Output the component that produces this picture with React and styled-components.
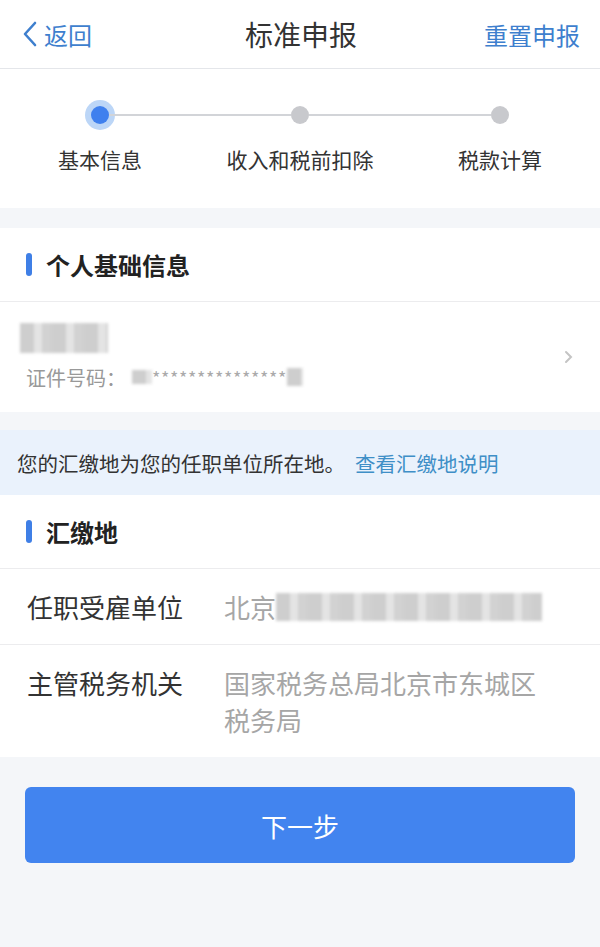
import React from 'react';
import styled, { createGlobalStyle } from 'styled-components';

const GlobalStyle = createGlobalStyle`
  html, body {
    margin: 0;
    padding: 0;
    background: #f4f6f9;
    font-family: "Noto Sans CJK SC", "Noto Sans", sans-serif;
  }
`;

const steps = [
  { label: '基本信息', active: true },
  { label: '收入和税前扣除' },
  { label: '税款计算' },
];

function App() {
  return (
    <Page>
      <GlobalStyle />
      <TopBar>
        <BackLink>
          <svg width="16" height="28" viewBox="0 0 16 28">
            <path d="M13 3 L3 14 L13 25" fill="none" stroke="#3e7fce" strokeWidth="2.6" strokeLinecap="round" strokeLinejoin="round" />
          </svg>
          返回
        </BackLink>
        <Title>标准申报</Title>
        <ResetLink>重置申报</ResetLink>
      </TopBar>

      <StepsPanel>
        <StepTrack>
          {steps.map((s, i) => (
            <Step key={s.label}>
              <DotRow>
                <Line $hidden={i === 0} />
                <Dot $active={s.active} />
                <Line $hidden={i === steps.length - 1} />
              </DotRow>
              <StepLabel>{s.label}</StepLabel>
            </Step>
          ))}
        </StepTrack>
      </StepsPanel>

      <Card>
        <SectionHead>
          <Bar />
          个人基础信息
        </SectionHead>
        <PersonRow>
          <div>
            <Mosaic $w={88} $h={30} />
            <IdLine>
              证件号码：
              <Masked>
                <Mosaic $w={20} $h={14} />
                ***************
                <Mosaic $w={16} $h={18} />
              </Masked>
            </IdLine>
          </div>
          <svg width="12" height="16" viewBox="0 0 12 16">
            <path d="M4 3 L9 8 L4 13" fill="none" stroke="#c4c4c4" strokeWidth="2" strokeLinecap="round" />
          </svg>
        </PersonRow>
      </Card>

      <Notice>
        您的汇缴地为您的任职单位所在地。
        <NoticeLink>查看汇缴地说明</NoticeLink>
      </Notice>

      <Card $flush>
        <SectionHead>
          <Bar />
          汇缴地
        </SectionHead>
        <FieldRow>
          <FieldLabel>任职受雇单位</FieldLabel>
          <FieldValue>
            北京
            <Mosaic $w={266} $h={28} />
          </FieldValue>
        </FieldRow>
        <FieldRow $divided>
          <FieldLabel>主管税务机关</FieldLabel>
          <FieldValue>国家税务总局北京市东城区税务局</FieldValue>
        </FieldRow>
      </Card>

      <Footer>
        <NextButton>下一步</NextButton>
      </Footer>
    </Page>
  );
}

export default App;

const Page = styled.div`
  width: 600px;
  min-height: 947px;
  background: #f4f6f9;
`;

const TopBar = styled.div`
  height: 68px;
  display: flex;
  align-items: center;
  justify-content: space-between;
  padding: 0 20px 0 22px;
  background: #fff;
  border-bottom: 1px solid #e4e6ea;
`;

const BackLink = styled.div`
  display: flex;
  align-items: center;
  gap: 6px;
  color: #3e7fce;
  font-size: 24px;
  width: 140px;
`;

const Title = styled.div`
  font-size: 28px;
  color: #333;
`;

const ResetLink = styled.div`
  width: 140px;
  text-align: right;
  color: #3e7fce;
  font-size: 24px;
`;

const StepsPanel = styled.div`
  background: #fff;
  height: 139px;
  padding-top: 30px;
  box-sizing: border-box;
  margin-bottom: 20px;
`;

const StepTrack = styled.div`
  display: grid;
  grid-template-columns: repeat(3, 200px);
`;

const Step = styled.div`
  display: flex;
  flex-direction: column;
  align-items: center;
`;

const DotRow = styled.div`
  width: 100%;
  height: 32px;
  display: flex;
  align-items: center;
`;

const Line = styled.div`
  flex: 1;
  height: 2px;
  background: ${(p) => (p.$hidden ? 'transparent' : '#d2d4d8')};
`;

const Dot = styled.div`
  width: 18px;
  height: 18px;
  border-radius: 50%;
  background: ${(p) => (p.$active ? '#3f80ee' : '#c8c9cd')};
  box-shadow: ${(p) => (p.$active ? '0 0 0 6px #bcd6f7' : 'none')};
`;

const StepLabel = styled.div`
  margin-top: 13px;
  font-size: 21px;
  color: #333;
`;

const Card = styled.div`
  background: #fff;
  margin-bottom: ${(p) => (p.$flush ? '30px' : '20px')};
`;

const SectionHead = styled.div`
  height: 74px;
  display: flex;
  align-items: center;
  gap: 14px;
  padding-left: 26px;
  font-size: 24px;
  font-weight: 700;
  color: #222;
  border-bottom: 1px solid #ececee;
  box-sizing: border-box;
`;

const Bar = styled.span`
  width: 6px;
  height: 23px;
  border-radius: 3px;
  background: #3f7fe6;
`;

const PersonRow = styled.div`
  height: 110px;
  display: flex;
  align-items: center;
  justify-content: space-between;
  padding: 0 26px 0 20px;
`;

const Mosaic = styled.span`
  display: inline-block;
  vertical-align: middle;
  width: ${(p) => p.$w}px;
  height: ${(p) => p.$h}px;
  background:
    repeating-linear-gradient(90deg, rgba(200, 200, 200, 0.9) 0 14px, rgba(225, 225, 225, 0.9) 14px 22px, rgba(190, 190, 190, 0.7) 22px 32px);
  filter: blur(1.5px);
`;

const IdLine = styled.div`
  margin-top: 10px;
  padding-left: 6px;
  font-size: 20px;
  color: #999;
  display: flex;
  align-items: center;
`;

const Masked = styled.span`
  display: inline-flex;
  align-items: center;
  font-size: 18px;
  color: #aaa;
  letter-spacing: 0.6px;
  margin-left: 6px;
`;

const Notice = styled.div`
  background: #eaf2fc;
  height: 65px;
  display: flex;
  align-items: center;
  padding-left: 17px;
  font-size: 20.5px;
  color: #333;
  margin-top: -2px;
`;

const NoticeLink = styled.span`
  color: #3f8fc7;
  margin-left: 10px;
`;

const FieldRow = styled.div`
  display: grid;
  grid-template-columns: 197px 330px;
  padding: 19px 0 19px 27px;
  border-top: ${(p) => (p.$divided ? '1px solid #ececee' : 'none')};
  font-size: 26px;
  line-height: 37px;
`;

const FieldLabel = styled.div`
  color: #333;
`;

const FieldValue = styled.div`
  color: #a6a6a6;
  display: flex;
  flex-wrap: wrap;
  align-items: center;
`;

const Footer = styled.div`
  padding: 0 25px;
`;

const NextButton = styled.button`
  width: 100%;
  height: 76px;
  border: none;
  border-radius: 6px;
  background: #4284ef;
  color: #fff;
  font-size: 26px;
  font-family: inherit;
`;
